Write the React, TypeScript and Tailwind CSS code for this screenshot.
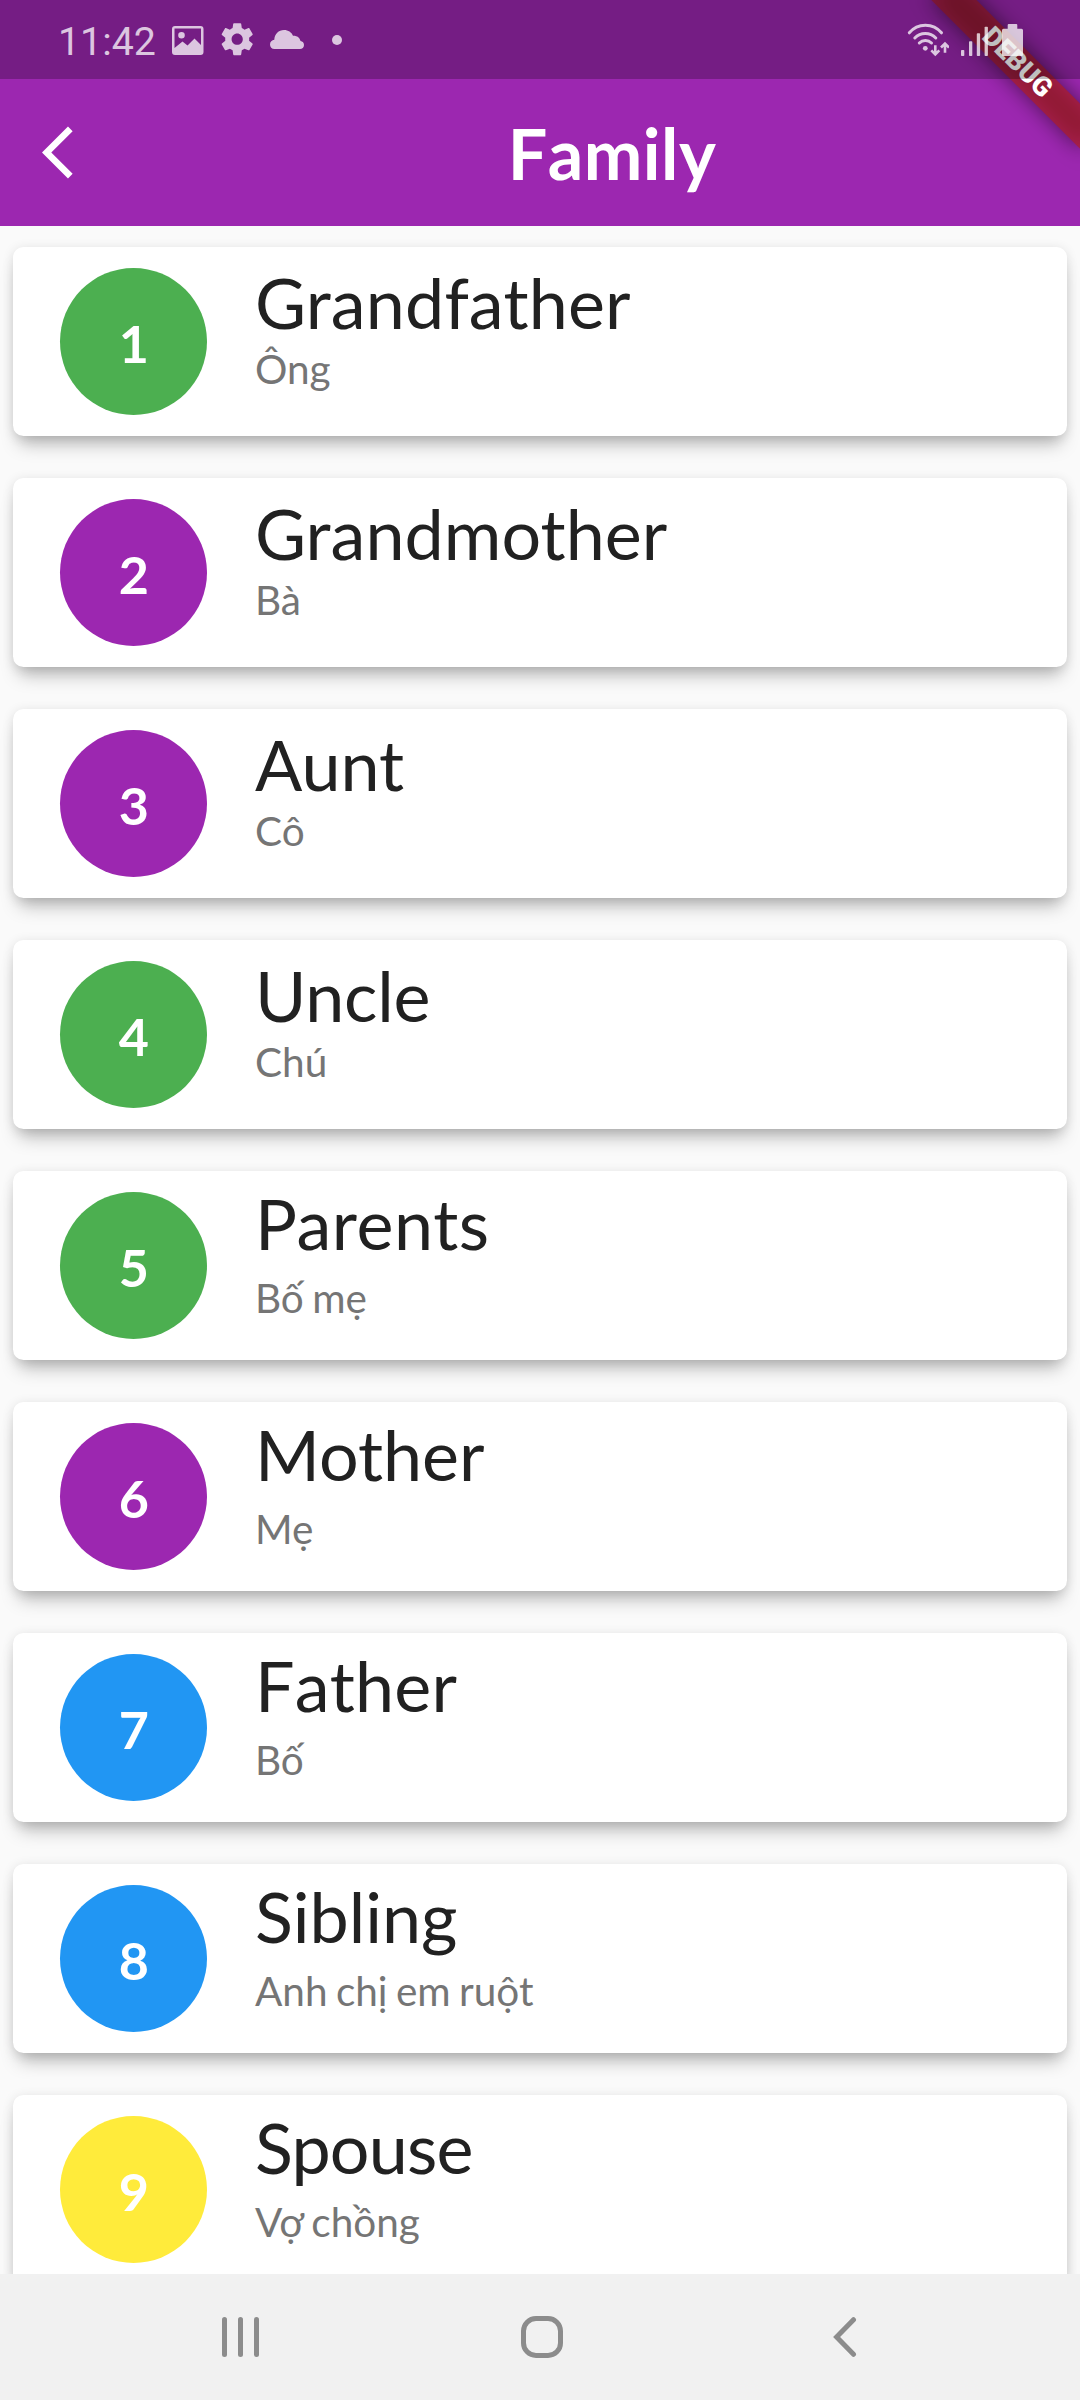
import React from "react";

type Word = {
  title: string;
  meaning: string;
  color: string;
  tracking?: string;
  tall?: boolean;
};

const WORDS: Word[] = [
  { title: "Grandfather", meaning: "Ông", color: "bg-[#4caf50]", tracking: "tracking-[0.17px]" },
  { title: "Grandmother", meaning: "Bà", color: "bg-[#9c27b0]", tracking: "tracking-[0.05px]" },
  { title: "Aunt", meaning: "Cô", color: "bg-[#9c27b0]" },
  { title: "Uncle", meaning: "Chú", color: "bg-[#4caf50]", tracking: "tracking-[-0.25px]" },
  { title: "Parents", meaning: "Bố mẹ", color: "bg-[#4caf50]", tracking: "tracking-[0.58px]", tall: true },
  { title: "Mother", meaning: "Mẹ", color: "bg-[#9c27b0]", tall: true },
  { title: "Father", meaning: "Bố", color: "bg-[#2196f3]", tracking: "tracking-[0.2px] [font-kerning:none]", tall: true },
  { title: "Sibling", meaning: "Anh chị em ruột", color: "bg-[#2196f3]", tall: true },
  { title: "Spouse", meaning: "Vợ chồng", color: "bg-[#ffeb3b]", tracking: "tracking-[-0.8px]", tall: true },
];

function WordCard({ word, index }: { word: Word; index: number }) {
  return (
    <li className="flex h-[189px] shrink-0 items-start rounded-[10.5px] bg-white pl-[47.4px] shadow-[0_14px_18px_-6px_rgba(0,0,0,0.26),0_2px_12px_rgba(0,0,0,0.12)]">
      <div
        className={`mt-[21px] flex size-[147px] shrink-0 items-center justify-center rounded-full pt-[3px] text-[52px] leading-[62px] font-bold text-white ${word.color}`}
      >
        {index}
      </div>
      <div className={`ml-[47.6px] flex flex-col ${word.tall ? "gap-[9px] pt-[10px]" : "gap-px pt-[13px]"}`}>
        <h2 className={`text-[70px] leading-[84px] text-[#212121] ${word.tracking ?? ""}`}>{word.title}</h2>
        <p className="text-[40.5px] leading-[48px] text-[#757575] [word-spacing:-2px]">{word.meaning}</p>
      </div>
    </li>
  );
}

function DebugBanner() {
  return (
    <div className="absolute top-[47.4px] left-[911.9px] h-[31.5px] w-[210px] rotate-45">
      <div className="absolute inset-0 bg-black/50 blur-[10.4px]" />
      <div className="relative flex h-full items-center justify-center bg-[rgba(183,28,28,0.627)] font-[Roboto] text-[27px] leading-none font-black text-white">
        DEBUG
      </div>
    </div>
  );
}

function StatusBar() {
  return (
    <div className="absolute inset-x-0 top-0 flex h-[79px] items-center bg-black/25 pl-[58px] text-white/75">
      <span className="w-[108px] pt-[5px] font-[Roboto] text-[39.3px] leading-[46px]">11:42</span>
      <svg className="ml-[5.5px] h-[79px] w-[32px] shrink-0" viewBox="171.5 0 32 79" fill="currentColor" fillRule="evenodd">
        <path d="M174.500 26H200a3 3 0 0 1 3 3V52a3 3 0 0 1-3 3H174.500a3 3 0 0 1-3-3V29a3 3 0 0 1 3-3ZM174 28.500V48L182 41.500L187 45.500L194 38.500L200.500 45V28.500ZM181 32a3.300 3.300 0 1 1 0 6.600a3.300 3.300 0 0 1 0-6.600Z" />
      </svg>
      <svg className="ml-[14.500px] size-[38.400px] shrink-0" viewBox="0 0 24 24" fill="currentColor">
        <path d="M19.430 12.980c.04-.32.07-.64.07-.98s-.03-.66-.07-.98l2.110-1.650c.19-.15.24-.42.12-.64l-2-3.460c-.12-.22-.39-.3-.61-.22l-2.490 1c-.52-.4-1.080-.73-1.690-.98l-.38-2.650C14.460 2.180 14.250 2 14 2h-4c-.25 0-.46.18-.49.42l-.38 2.650c-.61.25-1.170.59-1.690.98l-2.490-1c-.23-.09-.49 0-.61.22l-2 3.460c-.13.22-.07.49.12.64l2.110 1.650c-.04.32-.07.65-.07.98s.03.66.07.98l-2.110 1.650c-.19.15-.24.42-.12.64l2 3.460c.12.22.39.3.61.22l2.490-1c.52.4 1.080.73 1.690.98l.38 2.650c.03.24.24.42.49.42h4c.25 0 .46-.18.49-.42l.38-2.650c.61-.25 1.170-.59 1.690-.98l2.490 1c.23.09.49 0 .61-.22l2-3.460c.12-.22.07-.49-.12-.64l-2.110-1.650zM12 15.500c-1.930 0-3.500-1.570-3.500-3.500s1.570-3.500 3.500-3.500 3.500 1.570 3.500 3.500-1.570 3.500-3.500 3.500z" />
      </svg>
      <svg className="ml-[13.500px] h-[79px] w-[36px] shrink-0" viewBox="270 0 36 79" fill="currentColor">
        <path d="M274.500 49C271.800 49 270 47 270 44.500C270 41.800 272 40 274.300 39.800C274.600 34 278.600 30 284 30C288.300 30 291.500 32.300 293 35.700C297 35.500 300 37.800 300.500 41C302.700 41.300 304 43 304 45C304 47.400 302.200 49 300 49Z" />
      </svg>
      <div className="ml-[26px] size-[10px] rounded-full bg-white/75" />
      <svg className="ml-auto h-[79px] w-[42px] shrink-0" viewBox="907 0 42 79" fill="none" stroke="currentColor" strokeWidth="3">
        <path d="M909.300 32.800A20.800 20.800 0 0 1 941.500 32.800M914.800 38A14.500 14.500 0 0 1 935.800 38M919.300 43A8.500 8.500 0 0 1 931.500 43" strokeLinecap="round" />
        <circle cx="925.300" cy="48.300" r="2.400" fill="currentColor" stroke="none" />
        <path d="M935.300 45.300V54M931.300 50.300L935.300 54.300L939.300 50.300M945 52.800V44M941 47.500L945 43.500L949 47.500" strokeWidth="2.600" />
      </svg>
      <svg className="ml-[11px] h-[79px] w-[30px] shrink-0" viewBox="960 0 30 79" fill="currentColor">
        <rect x="961" y="50" width="3.300" height="6" rx="0.800" />
        <rect x="969" y="41.300" width="3.300" height="14.700" rx="0.800" />
        <rect x="976.800" y="33.300" width="3.300" height="22.700" rx="0.800" />
        <rect x="984.600" y="26.700" width="3.300" height="29.300" rx="0.800" />
      </svg>
      <svg className="mr-[57px] ml-[12px] h-[79px] w-[21px] shrink-0" viewBox="1002 0 21 79" fill="currentColor">
        <path d="M1007.700 25a1 1 0 0 1 1-1h7.600a1 1 0 0 1 1 1V28.700H1021.500a1.500 1.500 0 0 1 1.500 1.500V54.500a1.500 1.500 0 0 1-1.500 1.500H1003.500a1.500 1.500 0 0 1-1.500-1.500V30.200a1.500 1.500 0 0 1 1.500-1.500H1007.700Z" />
      </svg>
    </div>
  );
}

function NavigationBar() {
  return (
    <nav className="flex h-[126px] shrink-0 items-center bg-[#f1f1f1] text-[#8c8c8c]">
      <div className="ml-[221.500px] flex h-10 w-[37px] justify-between">
        <span className="w-[5px] rounded-full bg-[#8c8c8c]" />
        <span className="w-[5px] rounded-full bg-[#8c8c8c]" />
        <span className="w-[5px] rounded-full bg-[#8c8c8c]" />
      </div>
      <div className="ml-[262.500px] size-[42px] rounded-[15px] border-[5px] border-[#8c8c8c]" />
      <svg className="ml-[269.500px] h-10 w-[24px]" viewBox="0 0 24 40" fill="none" stroke="currentColor" strokeWidth="5" strokeLinecap="round">
        <path d="M20.500 2.700L3.600 20L20.500 37.300" />
      </svg>
    </nav>
  );
}

export default function App() {
  return (
    <div className="relative flex h-[2400px] w-[1080px] flex-col overflow-hidden bg-[#fafafa] font-[Lato,sans-serif]">
      <header className="flex h-[226px] shrink-0 items-center bg-[#9c27b0] pt-[79px] text-white">
        <div className="flex w-[147px] shrink-0 pl-[42px]">
          <svg className="size-[63px]" viewBox="0 0 24 24" fill="currentColor">
            <path d="M11.670 3.870L9.900 2.100 0 12l9.900 9.900 1.770-1.770L3.540 12z" />
          </svg>
        </div>
        <h1 className="flex-1 pr-[3px] text-center text-[70px] leading-[84px] font-bold tracking-[0.450px] [font-kerning:none]">Family</h1>
      </header>
      <ul className="flex min-h-0 flex-1 flex-col gap-[42px] overflow-hidden px-[13px] pt-[21px]">
        {WORDS.map((word, i) => (
          <WordCard key={word.title} word={word} index={i + 1} />
        ))}
      </ul>
      <NavigationBar />
      <DebugBanner />
      <StatusBar />
    </div>
  );
}
